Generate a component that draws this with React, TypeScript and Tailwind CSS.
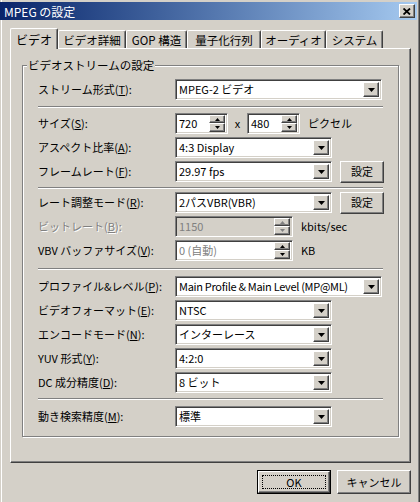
import React from 'react';

const raised =
  'bg-[#d4d0c8] border border-t-white border-l-white border-r-[#404040] border-b-[#404040] shadow-[inset_-1px_-1px_0_#808080]';
const sunken =
  'border border-t-[#808080] border-l-[#808080] border-r-white border-b-white shadow-[inset_1px_1px_0_#404040,inset_-1px_-1px_0_#d4d0c8]';

const Arrow: React.FC<{ up?: boolean; small?: boolean; disabled?: boolean }> = ({ up, small, disabled }) => {
  const w = small ? 5 : 7;
  const h = small ? 3 : 4;
  const pts = up ? `0,${h} ${w},${h} ${w / 2},0` : `0,0 ${w},0 ${w / 2},${h}`;
  return (
    <svg width={w} height={h} viewBox={`0 0 ${w} ${h}`} className="block">
      <polygon points={pts} fill={disabled ? '#808080' : '#000'} />
    </svg>
  );
};

const Combo: React.FC<{ value: string; w: string; tight?: boolean }> = ({ value, w, tight }) => (
  <div className={`${sunken} ${w} h-[21px] bg-white flex items-center p-[2px]`}>
    <span className={`flex-1 pl-[1px] whitespace-nowrap text-black ${tight ? 'tracking-[-0.3px]' : ''}`}>{value}</span>
    <div className={`${raised} w-[16px] h-[15px] flex items-center justify-center`}>
      <Arrow />
    </div>
  </div>
);

const Spin: React.FC<{ value: string; w: string; disabled?: boolean; grey?: boolean }> = ({ value, w, disabled, grey }) => (
  <div
    className={`${sunken} ${w} h-[21px] flex items-center p-[2px] ${disabled ? 'bg-[#d4d0c8]' : 'bg-white'}`}
  >
    <span className={`flex-1 pl-[1px] whitespace-nowrap ${disabled || grey ? 'text-[#808080]' : 'text-black'}`}>
      {value}
    </span>
    <div className="flex flex-col w-[16px] h-[17px]">
      <div className={`${raised} h-[8px] flex items-center justify-center`}>
        <Arrow up small disabled={disabled} />
      </div>
      <div className={`${raised} h-[9px] flex items-center justify-center`}>
        <Arrow small disabled={disabled} />
      </div>
    </div>
  </div>
);

const Btn: React.FC<{ label: string; w: string; h: string; focused?: boolean }> = ({ label, w, h, focused }) =>
  focused ? (
    <div className={`${w} ${h} border border-black`}>
      <div className={`${raised} w-full h-full flex items-center justify-center p-[3px]`}>
        <div className="w-full h-full border border-dotted border-black flex items-center justify-center">{label}</div>
      </div>
    </div>
  ) : (
    <div className={`${raised} ${w} ${h} flex items-center justify-center`}>{label}</div>
  );

const Sep: React.FC<{ mt: string }> = ({ mt }) => (
  <div className={`${mt} w-[345px] border-t border-t-[#808080] border-b border-b-white`} />
);

const Row: React.FC<{ label: React.ReactNode; disabled?: boolean; className?: string; children: React.ReactNode }> = ({
  label,
  disabled,
  className,
  children,
}) => (
  <div className={`flex items-center h-[21px] ${className ?? ''}`}>
    <span
      className={`w-[137px] shrink-0 whitespace-nowrap ${
        disabled ? 'text-[#808080] [text-shadow:1px_1px_0_#fff]' : 'text-black'
      }`}
    >
      {label}
    </span>
    {children}
  </div>
);

const tabs = [
  { label: 'ビデオ', w: 'w-[48px]' },
  { label: 'ビデオ詳細', w: 'w-[68px]' },
  { label: 'GOP 構造', w: 'w-[61px]' },
  { label: '量子化行列', w: 'w-[74px]' },
  { label: 'オーディオ', w: 'w-[65px]' },
  { label: 'システム', w: 'w-[57px]' },
];

const App: React.FC = () => {
  return (
    <div className="w-[420px] h-[502px] bg-[#d4d0c8] overflow-hidden flex flex-col text-[11px] leading-[15px] font-['Noto_Sans_CJK_JP','Noto_Sans',sans-serif] shadow-[inset_1px_0_0_#d4d0c8,inset_2px_0_0_#fff,inset_-1px_0_0_#404040,inset_-2px_0_0_#808080]">
      {/* title bar */}
      <div className="mt-[2px] mr-[3px] h-[18px] flex items-center bg-gradient-to-r from-[#0a246a] to-[#a6caf0] pl-[4px] pr-[2px]">
        <span className="flex-1 text-white text-[12px]">MPEG の設定</span>
        <div className={`${raised} w-[16px] h-[14px] flex items-center justify-center`}>
          <svg width="8" height="7" viewBox="0 0 8 7">
            <path d="M0.5 0.5 L7 6.5 M7 0.5 L0.5 6.5" stroke="#000" strokeWidth="1.8" />
          </svg>
        </div>
      </div>

      <div className="ml-[10px] mt-[8px]">
        {/* tabs */}
        <div className="flex items-end h-[20px]">
          {tabs.map((t, i) =>
            i === 0 ? (
              <div
                key={t.label}
                className={`${t.w} h-[21px] -mb-[1px] relative z-10 bg-[#d4d0c8] border-t border-l border-t-white border-l-white border-r border-r-[#404040] shadow-[inset_-1px_0_0_#808080] rounded-t-[2px] flex items-start justify-center pt-[3px] text-[12px]`}
              >
                {t.label}
              </div>
            ) : (
              <div
                key={t.label}
                className={`${t.w} h-[18px] bg-[#d4d0c8] border-t border-l border-t-white border-l-white border-r border-r-[#404040] shadow-[inset_-1px_0_0_#808080] rounded-t-[2px] flex items-start justify-center pt-[2px] text-[11.5px] whitespace-nowrap`}
              >
                {t.label}
              </div>
            )
          )}
        </div>

        {/* tab panel */}
        <div className="w-[401px] h-[415px] border border-t-white border-l-white border-r-[#404040] border-b-[#404040] shadow-[inset_-1px_-1px_0_#808080] pt-[16px] pl-[11px]">
          <div className="relative w-[377px] h-[372px] border border-[#808080] shadow-[inset_1px_1px_0_#fff,1px_1px_0_#fff] pl-[15px]">
            <span className="absolute -top-[8px] left-[4px] bg-[#d4d0c8] px-[1px] text-[11.5px]">ビデオストリームの設定</span>

            <Row
              className="mt-[13px]"
              label={
                <>
                  ストリーム形式(<u>T</u>):
                </>
              }
            >
              <Combo value="MPEG-2 ビデオ" w="w-[207px]" />
            </Row>

            <Sep mt="mt-[6px]" />

            <Row
              className="mt-[5px]"
              label={
                <>
                  サイズ(<u>S</u>):
                </>
              }
            >
              <Spin value="720" w="w-[53px]" />
              <span className="w-[19px] text-center">x</span>
              <Spin value="480" w="w-[53px]" />
              <span className="ml-[8px]">ピクセル</span>
            </Row>
            <Row
              className="mt-[3px]"
              label={
                <>
                  アスペクト比率(<u>A</u>):
                </>
              }
            >
              <Combo value="4:3 Display" w="w-[157px]" />
            </Row>
            <Row
              className="mt-[3px]"
              label={
                <>
                  フレームレート(<u>F</u>):
                </>
              }
            >
              <Combo value="29.97 fps" w="w-[157px]" />
              <div className="ml-[8px]">
                <Btn label="設定" w="w-[44px]" h="h-[22px]" />
              </div>
            </Row>

            <Sep mt="mt-[5px]" />

            <Row
              className="mt-[3px]"
              label={
                <>
                  レート調整モード(<u>R</u>):
                </>
              }
            >
              <Combo value="2パスVBR(VBR)" w="w-[157px]" />
              <div className="ml-[8px]">
                <Btn label="設定" w="w-[44px]" h="h-[22px]" />
              </div>
            </Row>
            <Row
              className="mt-[3px]"
              disabled
              label={
                <>
                  ビットレート(<u>B</u>):
                </>
              }
            >
              <Spin value="1150" w="w-[118px]" disabled />
              <span className="ml-[8px]">kbits/sec</span>
            </Row>
            <Row
              className="mt-[3px]"
              label={
                <>
                  VBV バッファサイズ(<u>V</u>):
                </>
              }
            >
              <Spin value="0 (自動)" w="w-[118px]" grey />
              <span className="ml-[8px]">KB</span>
            </Row>

            <Sep mt="mt-[7px]" />

            <Row
              className="mt-[6px]"
              label={
                <>
                  プロファイル&amp;レベル(<u>P</u>):
                </>
              }
            >
              <Combo value="Main Profile & Main Level (MP@ML)" w="w-[207px]" tight />
            </Row>
            <Row
              className="mt-[3px]"
              label={
                <>
                  ビデオフォーマット(<u>E</u>):
                </>
              }
            >
              <Combo value="NTSC" w="w-[157px]" />
            </Row>
            <Row
              className="mt-[3px]"
              label={
                <>
                  エンコードモード(<u>N</u>):
                </>
              }
            >
              <Combo value="インターレース" w="w-[157px]" />
            </Row>
            <Row
              className="mt-[3px]"
              label={
                <>
                  YUV 形式(<u>Y</u>):
                </>
              }
            >
              <Combo value="4:2:0" w="w-[157px]" />
            </Row>
            <Row
              className="mt-[3px]"
              label={
                <>
                  DC 成分精度(<u>D</u>):
                </>
              }
            >
              <Combo value="8 ビット" w="w-[157px]" />
            </Row>

            <Sep mt="mt-[5px]" />

            <Row
              className="mt-[6px]"
              label={
                <>
                  動き検索精度(<u>M</u>):
                </>
              }
            >
              <Combo value="標準" w="w-[157px]" />
            </Row>
          </div>
        </div>

        {/* buttons */}
        <div className="w-[401px] mt-[7px] flex justify-end gap-[6px]">
          <Btn label="OK" w="w-[74px]" h="h-[24px]" focused />
          <Btn label="キャンセル" w="w-[74px]" h="h-[24px]" />
        </div>
      </div>
    </div>
  );
};

export default App;
